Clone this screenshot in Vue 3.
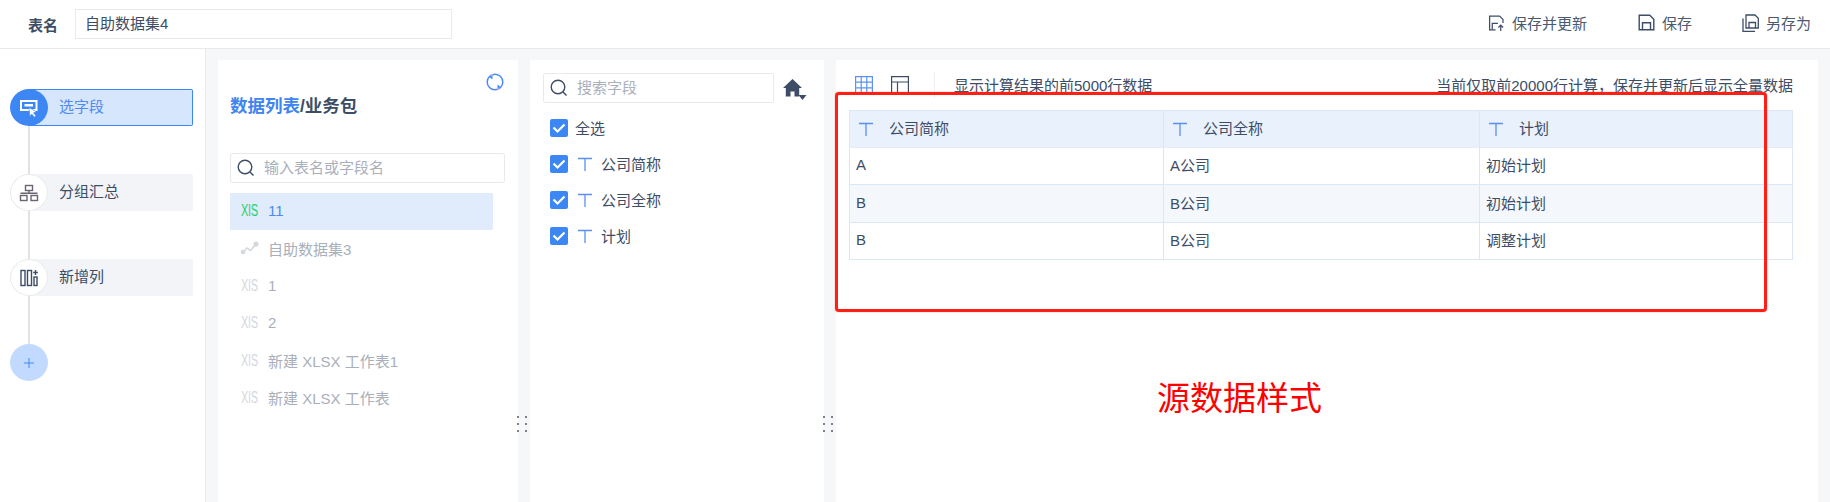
<template>
  <div class="page">
    <header class="topbar">
      <span class="name-label">表名</span>
      <div class="name-input">自助数据集4</div>
      <div class="actions">
        <span class="action action-update">
          <svg width="17" height="18" viewBox="0 0 18 18" fill="none" stroke="#3d4d66" stroke-width="1.3">
            <path d="M8 16.300H1.700V1.700h10.600l3.600 3.600V9" />
            <path d="M4.500 16V9.500h6" />
            <path d="M13.500 17.500v-6M11 13.800l2.500-2.500 2.500 2.500" />
          </svg>
          保存并更新
        </span>
        <span class="action action-save">
          <svg width="17" height="17" viewBox="0 0 17 17" fill="none" stroke="#3d4d66" stroke-width="1.4">
            <path d="M1.200 1.200h10.600l4 4v10.600H1.200z" />
            <path d="M4.500 15.800V8.800h8v7" />
          </svg>
          保存
        </span>
        <span class="action">
          <svg width="17" height="18" viewBox="0 0 17 18" fill="none" stroke="#3d4d66" stroke-width="1.3">
            <path d="M4 1h9l3.300 3.300V14H4z" />
            <path d="M7 14V8.500h6.500V14" />
            <path d="M1 4.500v12.800h12" />
          </svg>
          另存为
        </span>
      </div>
    </header>

    <div class="workspace">
      <aside class="rail">
        <div class="step active">
          <span class="step-circle">
            <svg width="20" height="20" viewBox="0 0 20 20">
              <rect x="2" y="3" width="15.500" height="9" fill="none" stroke="#fff" stroke-width="2" />
              <rect x="5.500" y="6" width="8.500" height="2.500" fill="#fff" />
              <path d="M10 9.500l7.500 4.300-3 1 2.500 3-1.700 1.400-2.500-3.100-1.900 2.300z" fill="#fff" stroke="#3d87f5" stroke-width=".6" />
            </svg>
          </span>
          <span class="step-label">选字段</span>
        </div>
        <div class="step">
          <span class="step-circle">
            <svg width="20" height="20" viewBox="0 0 20 20" fill="none" stroke="#6b6470" stroke-width="1.4">
              <rect x="6.500" y="2.500" width="7" height="5" />
              <rect x="1.500" y="12.500" width="6.500" height="5" />
              <rect x="12" y="12.500" width="6.500" height="5" />
              <path d="M10 7.500v2.500M1.500 10.300h17" />
            </svg>
          </span>
          <span class="step-label">分组汇总</span>
        </div>
        <div class="step">
          <span class="step-circle">
            <svg width="18" height="18" viewBox="0 0 18 18" fill="none" stroke="#3d4d66" stroke-width="1.4">
              <rect x="1" y="1.500" width="4" height="15" />
              <rect x="7.500" y="1.500" width="4" height="15" />
              <rect x="14" y="8" width="3" height="8.500" />
              <path d="M15.500 1v5M13.200 3.500h4.600" />
            </svg>
          </span>
          <span class="step-label">新增列</span>
        </div>
        <div class="step add">
          <span class="step-circle">
            <svg width="10" height="10" viewBox="0 0 10 10" stroke="#3f88f5" stroke-width="1">
              <path d="M5 0v10M0 5h10" />
            </svg>
          </span>
        </div>
      </aside>

      <section class="panel source-panel">
        <svg class="refresh" width="18" height="18" viewBox="0 0 18 18" fill="none">
          <circle cx="9" cy="9" r="7.800" stroke="#4a8cf5" stroke-width="1.500" />
          <path d="M4.500 1.800l2 .1M13.500 16.200l-2-.1" stroke="#e6b3e8" stroke-width="1.500" />
          <path d="M6.500 2.500l0 4-3.300-2.400zM11.500 15.500l0-4 3.300 2.400z" fill="#4a8cf5" />
        </svg>
        <h2 class="source-title"><span class="blue">数据列表</span>/业务包</h2>
        <div class="search source-search">
          <svg width="18" height="18" viewBox="0 0 18 18" fill="none" stroke="#3d4d66" stroke-width="1.4">
            <circle cx="8" cy="8" r="6.800" />
            <path d="M13 13l3.500 3.500" />
          </svg>
          <span>输入表名或字段名</span>
        </div>
        <ul class="source-list">
          <li v-for="item in sources" :key="item.name" :class="{ current: item.current }">
            <svg v-if="item.type === 'line'" class="src-icon" width="17" height="14" viewBox="0 0 17 14" fill="#d4d7dc" stroke="#d4d7dc" stroke-width="1.6">
              <path d="M2 11l4-4 3.500 2.500L15 3" fill="none" />
              <circle cx="15" cy="3" r="1.800" />
              <circle cx="2" cy="11" r="1.500" />
            </svg>
            <svg v-else class="src-icon" width="17" height="14" viewBox="0 0 17 14">
              <text x="0" y="13" class="xls" textLength="17" lengthAdjust="spacingAndGlyphs">XlS</text>
            </svg>
            <span class="src-name">{{ item.name }}</span>
          </li>
        </ul>
        <span class="grip">
          <i v-for="n in 6" :key="n"></i>
        </span>
      </section>

      <section class="panel field-panel">
        <div class="field-tools">
          <div class="search field-search">
            <svg width="18" height="18" viewBox="0 0 18 18" fill="none" stroke="#3d4d66" stroke-width="1.4">
              <circle cx="8" cy="8" r="6.800" />
              <path d="M13 13l3.500 3.500" />
            </svg>
            <span>搜索字段</span>
          </div>
          <svg class="home" width="24" height="22" viewBox="0 0 24 22" fill="#3d4d66">
            <path d="M9.500 0L0 9h2.800v8.500h4.700v-5h4v5h4.700V9H19z" />
            <path d="M15.500 16h8l-4 5z" />
          </svg>
        </div>
        <ul class="field-list">
          <li v-for="field in fields" :key="field.label">
            <span class="check">
              <svg width="14" height="12" viewBox="0 0 14 12" fill="none" stroke="#fff" stroke-width="2.200">
                <path d="M1.500 5.500l4 4 7-7" />
              </svg>
            </span>
            <svg v-if="field.typed" class="t-icon" width="14" height="14" viewBox="0 0 14 14" fill="none" stroke="#5b8ff0" stroke-width="1.300">
              <path d="M0 1.500h14M7 1.500V14" />
            </svg>
            <span :class="field.typed ? 'field-typed' : 'field-all'">{{ field.label }}</span>
          </li>
        </ul>
        <span class="grip">
          <i v-for="n in 6" :key="n"></i>
        </span>
      </section>

      <section class="panel preview-panel">
        <div class="preview-bar">
          <svg width="18" height="18" viewBox="0 0 18 18" fill="none" stroke="#5b93f2" stroke-width="1.200">
            <path d="M.6.600h16.800v16.800H.6zM.6 6.200h16.800M.6 11.800h16.800M6.200.600v16.800M11.800.600v16.800" />
          </svg>
          <svg class="layout-icon" width="18" height="18" viewBox="0 0 18 18" fill="none" stroke="#3d4d66" stroke-width="1.200">
            <path d="M.6.600h16.800v16.800H.6zM.6 6h16.800M6.500 6v11.400" />
          </svg>
          <span class="bar-divider"></span>
          <span class="bar-text">显示计算结果的前5000行数据</span>
          <span class="bar-text bar-note">当前仅取前20000行计算，保存并更新后显示全量数据</span>
        </div>
        <table class="data-table">
          <colgroup>
            <col class="col-a" />
            <col class="col-b" />
            <col />
          </colgroup>
          <thead>
            <tr>
              <th v-for="col in columns" :key="col">
                <svg width="14" height="14" viewBox="0 0 14 14" fill="none" stroke="#5b8ff0" stroke-width="1.300">
                  <path d="M0 1.500h14M7 1.500V14" />
                </svg>
                <span>{{ col }}</span>
              </th>
            </tr>
          </thead>
          <tbody>
            <tr v-for="(row, i) in rows" :key="i">
              <td v-for="cell in row" :key="cell">{{ cell }}</td>
            </tr>
          </tbody>
        </table>

        <!-- 截图上的红框标注 -->
        <div class="red-box"></div>
        <div class="red-note">源数据样式</div>
      </section>
    </div>
  </div>
</template>

<script setup>
const sources = [
  { name: '11', type: 'xls', current: true },
  { name: '自助数据集3', type: 'line' },
  { name: '1', type: 'xls' },
  { name: '2', type: 'xls' },
  { name: '新建 XLSX 工作表1', type: 'xls' },
  { name: '新建 XLSX 工作表', type: 'xls' }
]

const fields = [
  { label: '全选', typed: false },
  { label: '公司简称', typed: true },
  { label: '公司全称', typed: true },
  { label: '计划', typed: true }
]

const columns = ['公司简称', '公司全称', '计划']

const rows = [
  ['A', 'A公司', '初始计划'],
  ['B', 'B公司', '初始计划'],
  ['B', 'B公司', '调整计划']
]
</script>

<style>
html,
body {
  margin: 0;
  background: #fff;
}
</style>

<style scoped>
.page {
  width: 1830px;
  height: 502px;
  overflow: hidden;
  display: flex;
  flex-direction: column;
  font-family: "Liberation Sans", "Noto Sans CJK SC", sans-serif;
  font-size: 15px;
  color: #3d4d66;
  background: #fff;
}

.topbar {
  height: 48px;
  flex: none;
  display: flex;
  align-items: center;
  padding-left: 28px;
  border-bottom: 1px solid #e8eaed;
}

.name-label {
  font-weight: 700;
  width: 47px;
}

.name-input {
  width: 377px;
  height: 30px;
  box-sizing: border-box;
  border: 1px solid #e8eaed;
  line-height: 27px;
  padding-left: 9px;
}

.actions {
  margin-left: auto;
  display: flex;
  align-items: center;
  padding-right: 19px;
  padding-bottom: 3px;
}

.action {
  display: flex;
  align-items: center;
  gap: 7px;
  margin-left: 50px;
  color: #4b5a70;
}

.action-update {
  margin-left: 0;
}

.action-save {
  margin-left: 51px;
}

.workspace {
  flex: 1;
  display: flex;
  background: #f5f7f9;
  min-height: 0;
}

.rail {
  width: 205px;
  flex: none;
  box-sizing: content-box;
  background: #fff;
  border-right: 1px solid #e8eaed;
  padding-top: 40px;
  display: flex;
  flex-direction: column;
  gap: 48px;
}

.step {
  position: relative;
  display: flex;
  align-items: center;
  height: 37px;
  margin-left: 10px;
  width: 183px;
}

.step:not(.add)::after {
  content: "";
  position: absolute;
  left: 18px;
  top: 37px;
  width: 2px;
  height: 48px;
  background: #dfe3e6;
}

.step-circle {
  position: relative;
  z-index: 1;
  flex: none;
  width: 38px;
  height: 37px;
  box-sizing: border-box;
  border-radius: 50%;
  background: #fff;
  border: 1px solid #e8eaed;
  display: flex;
  align-items: center;
  justify-content: center;
}

.step-label {
  flex: 1;
  height: 37px;
  line-height: 36px;
  margin-left: -19px;
  padding-left: 30px;
  background: #f2f4f7;
  border-radius: 0 2px 2px 0;
}

.step.active .step-circle {
  background: #3d87f5;
  border: none;
}

.step.active .step-label {
  box-sizing: border-box;
  line-height: 34px;
  background: #d6e6fd;
  border: 1px solid #3d87f5;
  border-left: none;
  color: #4f8af0;
}

.step.add .step-circle {
  background: #c2daff;
  border: none;
}

.panel {
  position: relative;
  background: #fff;
  margin-top: 11px;
}

.source-panel {
  width: 300px;
  margin-left: 12px;
  box-sizing: border-box;
  padding-left: 12px;
}

.refresh {
  position: absolute;
  left: 268px;
  top: 13px;
}

.source-title {
  margin: 36px 0 0;
  font-size: 17.500px;
  line-height: 20px;
  font-weight: 700;
  color: #3d4d66;
}

.blue {
  color: #3f84f0;
}

.search {
  display: flex;
  align-items: center;
  gap: 9px;
  height: 30px;
  box-sizing: border-box;
  border: 1px solid #e8eaed;
  border-radius: 2px;
  padding-left: 6px;
  color: #aab0ba;
}

.search span {
  margin-top: -3px;
}

.source-search {
  width: 275px;
  margin-top: 37px;
}

.source-list,
.field-list {
  list-style: none;
  margin: 0;
  padding: 0;
}

.source-list {
  margin-top: 10px;
  width: 263px;
}

.source-list li {
  height: 37.400px;
  display: flex;
  align-items: center;
  padding-left: 11px;
  color: #a9afba;
}

.source-list li.current {
  background: #e0ebfb;
  color: #4f8af0;
}

.src-icon {
  flex: none;
  margin-top: -3px;
  overflow: visible;
}

.src-name {
  margin-left: 10px;
  margin-top: -2px;
}

.xls {
  font-family: "Liberation Sans", sans-serif;
  font-size: 16px;
  fill: #d5d8de;
}

.current .xls {
  fill: #1ed16c;
}

.grip {
  position: absolute;
  right: -9px;
  top: 356px;
  display: grid;
  grid-template-columns: 2px 2px;
  column-gap: 6px;
  row-gap: 5px;
  z-index: 2;
}

.grip i {
  width: 2px;
  height: 2px;
  background: #7a7f88;
}

.field-panel {
  width: 294px;
  margin-left: 12px;
  box-sizing: border-box;
  padding: 13px 0 0 13px;
}

.field-tools {
  display: flex;
  align-items: flex-start;
}

.field-search {
  width: 231px;
}

.home {
  margin: 6px 0 0 9px;
}

.field-list {
  margin-top: 7px;
  padding-left: 7px;
}

.field-list li {
  height: 36px;
  display: flex;
  align-items: center;
}

.check {
  flex: none;
  width: 18px;
  height: 18px;
  border-radius: 2px;
  background: #3d87f5;
  display: flex;
  align-items: center;
  justify-content: center;
}

.t-icon {
  margin-left: 10px;
}

.field-all {
  margin-left: 7px;
  margin-top: -2px;
}

.field-typed {
  margin-left: 9px;
  margin-top: -2px;
}

.preview-panel {
  width: 982px;
  margin-left: 12px;
  box-sizing: border-box;
  padding: 16px 25px 0 13px;
}

.preview-bar {
  display: flex;
  align-items: center;
  height: 18px;
  padding-left: 6px;
  margin-bottom: 16px;
}

.layout-icon {
  margin-left: 18px;
}

.bar-divider {
  width: 1px;
  height: 26px;
  background: #eceef1;
  margin: 0 19px 0 25px;
}

.bar-text {
  margin-top: -2px;
}

.bar-note {
  margin-left: auto;
}

.data-table {
  width: 944px;
  table-layout: fixed;
  border-collapse: collapse;
  border: 1px solid #dbe6f7;
}

.col-a {
  width: 314px;
}

.col-b {
  width: 316px;
}

.data-table th {
  height: 37px;
  padding: 0 0 4px 9px;
  box-sizing: border-box;
  background: #e9f1fd;
  border: 1px solid #dbe6f7;
  border-bottom-color: #e4ecf8;
  text-align: left;
  font-weight: 400;
}

.data-table th svg {
  vertical-align: -2px;
}

.data-table th span {
  margin-left: 16px;
}

.data-table td {
  height: 37px;
  padding: 0 0 3px 6px;
  box-sizing: border-box;
  border: 1px solid #dbe6f7;
}

.data-table tbody tr:nth-child(2) td {
  background: #f4f8fd;
  height: 38px;
}

.red-box {
  position: absolute;
  left: -1px;
  top: 32px;
  width: 932px;
  height: 220px;
  box-sizing: border-box;
  border: 3px solid #ff1f14;
  border-radius: 4px;
  box-shadow: 0 0 1px #ff1f14;
}

.red-note {
  position: absolute;
  left: 321px;
  top: 316px;
  font-size: 33px;
  line-height: 46px;
  color: #ff0000;
}
</style>
